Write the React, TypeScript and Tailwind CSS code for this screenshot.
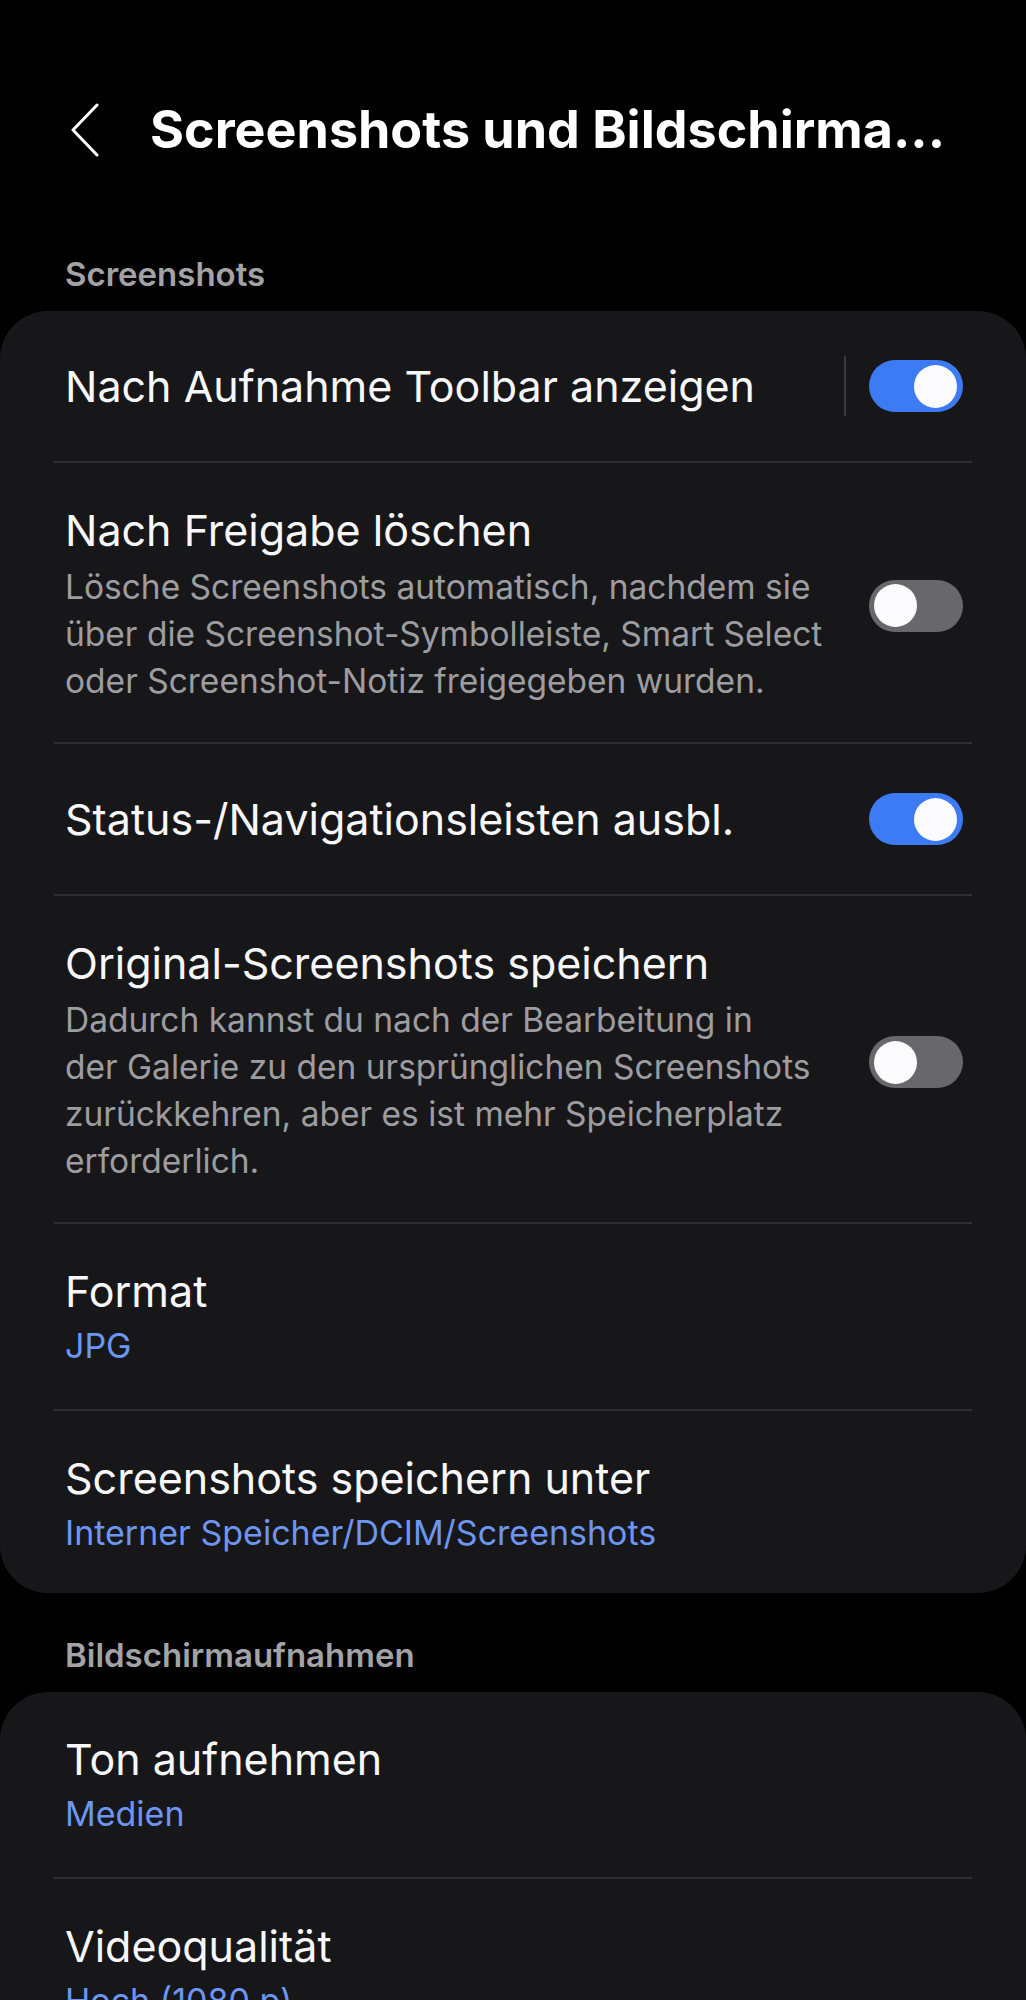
import React from 'react';

const Toggle: React.FC<{ on: boolean }> = ({ on }) => (
  <div
    className={`relative w-[94px] h-[52px] rounded-full flex items-center shrink-0 ${
      on ? 'bg-[#3d7bf4] justify-end pr-[6px]' : 'bg-[#67676c] justify-start pl-[5px]'
    }`}
  >
    <div className="w-[43px] h-[43px] rounded-full bg-[#fbfbfd]" />
  </div>
);

const Divider: React.FC = () => <div className="h-[2px] mx-[54px] bg-[#2f2f32]" />;

const ToggleRow: React.FC<{ title: string; lines?: string[]; on: boolean; split?: boolean }> = ({
  title,
  lines,
  on,
  split,
}) => (
  <div
    className={`flex items-center pl-[65px] pr-[63px] ${
      lines ? 'pt-[43px] pb-[37px]' : 'h-[150px]'
    }`}
  >
    <div className="flex-1 whitespace-nowrap">
      <div className="text-[43px] leading-[48px] text-[#f7f7f9]">{title}</div>
      {lines && (
        <div className="mt-[10px] text-[33.5px] leading-[47px] text-[#9d9da1]">
          {lines.map((l) => (
            <div key={l}>{l}</div>
          ))}
        </div>
      )}
    </div>
    {split && <div className="w-[2px] h-[60px] bg-[#3a3a3d] mr-[23px]" />}
    <Toggle on={on} />
  </div>
);

const ValueRow: React.FC<{ title: string; value: string; last?: boolean }> = ({ title, value, last }) => (
  <div className={`pl-[65px] pr-[63px] pt-[43px] ${last ? 'pb-[40px]' : 'pb-[43px]'}`}>
    <div className="text-[43px] leading-[48px] text-[#f7f7f9]">{title}</div>
    <div className="mt-[11px] text-[34px] leading-[40px] text-[#6d96f2]">{value}</div>
  </div>
);

const SectionLabel: React.FC<{ text: string; top: string }> = ({ text, top }) => (
  <div className={`pl-[65px] ${top} mb-[19px] text-[33px] leading-[36px] font-semibold text-[#a3a3a6]`}>
    {text}
  </div>
);

export default function App() {
  return (
    <div className="w-[1026px] h-[2000px] overflow-hidden bg-black font-['Inter',sans-serif]">
      {/* Header */}
      <header className="flex items-center h-[60px] mt-[100px]">
        <svg className="ml-[70px] shrink-0" width="30" height="54" viewBox="0 0 30 54" fill="none">
          <path d="M27 2 L3 27 L27 52" stroke="#ffffff" strokeWidth="3" strokeLinecap="round" strokeLinejoin="round" />
        </svg>
        <h1 className="ml-[50px] text-[52px] font-bold text-white leading-[60px] whitespace-nowrap">
          Screenshots und Bildschirma...
        </h1>
      </header>

      <SectionLabel text="Screenshots" top="mt-[96px]" />

      <div className="bg-[#171719] rounded-[48px]">
        <ToggleRow title="Nach Aufnahme Toolbar anzeigen" on split />
        <Divider />
        <ToggleRow
          title="Nach Freigabe löschen"
          lines={[
            'Lösche Screenshots automatisch, nachdem sie',
            'über die Screenshot-Symbolleiste, Smart Select',
            'oder Screenshot-Notiz freigegeben wurden.',
          ]}
          on={false}
        />
        <Divider />
        <ToggleRow title="Status-/Navigationsleisten ausbl." on />
        <Divider />
        <ToggleRow
          title="Original-Screenshots speichern"
          lines={[
            'Dadurch kannst du nach der Bearbeitung in',
            'der Galerie zu den ursprünglichen Screenshots',
            'zurückkehren, aber es ist mehr Speicherplatz',
            'erforderlich.',
          ]}
          on={false}
        />
        <Divider />
        <ValueRow title="Format" value="JPG" />
        <Divider />
        <ValueRow title="Screenshots speichern unter" value="Interner Speicher/DCIM/Screenshots" last />
      </div>

      <SectionLabel text="Bildschirmaufnahmen" top="mt-[44px]" />

      <div className="bg-[#171719] rounded-t-[48px]">
        <ValueRow title="Ton aufnehmen" value="Medien" />
        <Divider />
        <ValueRow title="Videoqualität" value="Hoch (1080 p)" />
      </div>
    </div>
  );
}
